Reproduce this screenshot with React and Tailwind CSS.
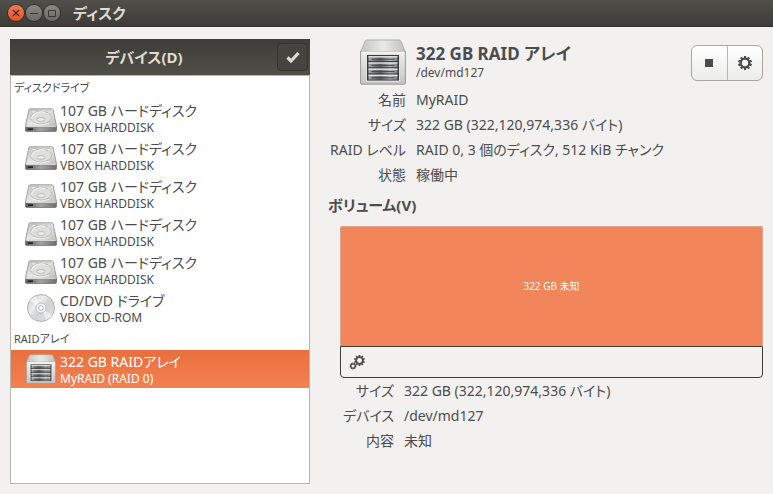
import React, { useId, useState } from 'react';

const drives = [
  { id: 'sda', kind: 'disk', name: '107 GB ハードディスク', model: 'VBOX HARDDISK' },
  { id: 'sdb', kind: 'disk', name: '107 GB ハードディスク', model: 'VBOX HARDDISK' },
  { id: 'sdc', kind: 'disk', name: '107 GB ハードディスク', model: 'VBOX HARDDISK' },
  { id: 'sdd', kind: 'disk', name: '107 GB ハードディスク', model: 'VBOX HARDDISK' },
  { id: 'sde', kind: 'disk', name: '107 GB ハードディスク', model: 'VBOX HARDDISK' },
  { id: 'sr0', kind: 'optical', name: 'CD/DVD ドライブ', model: 'VBOX CD-ROM' },
];

const arrays = [{ id: 'md127', kind: 'raid', name: '322 GB RAIDアレイ', model: 'MyRAID (RAID 0)' }];

const arrayDetails = [
  ['名前', 'MyRAID'],
  ['サイズ', '322 GB (322,120,974,336 バイト)'],
  ['RAID レベル', 'RAID 0, 3 個のディスク, 512 KiB チャンク'],
  ['状態', '稼働中'],
];

const volumeDetails = [
  ['サイズ', '322 GB (322,120,974,336 バイト)'],
  ['デバイス', '/dev/md127'],
  ['内容', '未知'],
];

const HardDiskIcon = () => {
  const id = useId();
  return (
    <svg viewBox="0 -3 32 27" className="h-[27px] w-8" aria-hidden="true">
      <defs>
        <linearGradient id={`${id}top`} x1="0" y1="0" x2="1" y2="1">
          <stop offset="0" stopColor="#c6c6c4" />
          <stop offset="0.5" stopColor="#e6e6e5" />
          <stop offset="1" stopColor="#bcbcba" />
        </linearGradient>
        <linearGradient id={`${id}front`}>
          <stop offset="0" stopColor="#5c5c5a" />
          <stop offset="0.5" stopColor="#a2a2a0" />
          <stop offset="1" stopColor="#6e6e6c" />
        </linearGradient>
      </defs>
      <path d="M.5 18.5h31v3.7q0 1.3-1.3 1.3H1.8Q.5 23.5.5 22.2z" fill={`url(#${id}front)`} stroke="#5c5c5a" strokeWidth="0.6" />
      <path d="M5.2.8h21.600q1 0 1.300 1l3.400 16q.2 1.200-1 1.200h-29q-1.200 0-1-1.200l3.400-16q.3-1 1.300-1z" fill={`url(#${id}top)`} stroke="#8c8c8a" strokeWidth="0.8" />
      <ellipse cx="16" cy="9.500" rx="10.500" ry="6.500" fill="#dededc" stroke="#adadab" strokeWidth="0.7" />
      <path d="M6.500 11C7 5.500 14 3 20 4.200" fill="none" stroke="#fafafa" strokeWidth="0.9" />
      <path d="M8 15.500q8 3 16 0" fill="none" stroke="#f7f7f6" strokeWidth="0.8" />
      <ellipse cx="16" cy="11.500" rx="4" ry="1.900" fill="#ededec" stroke="#a8a8a6" strokeWidth="0.7" />
      <path d="M6.500 2.500h6l-5 3.500zM21 2.700l4.500.2.8 3.600" fill="#ececeb" stroke="#b3b3b1" strokeWidth="0.6" />
      <path d="M3 20.300h5v1.700H3z" fill="#232322" />
      <path d="M1.500 18.400h29" stroke="#f5f5f5" strokeWidth="0.6" />
    </svg>
  );
};

const DiscIcon = () => {
  const id = useId();
  return (
    <svg viewBox="0 0 32 32" className="size-8" aria-hidden="true">
      <defs>
        <linearGradient id={`${id}disc`} x1="0" y1="0" x2="1" y2="1">
          <stop offset="0" stopColor="#c9c9c9" />
          <stop offset="0.35" stopColor="#ececec" />
          <stop offset="0.55" stopColor="#d0d2d4" />
          <stop offset="1" stopColor="#e4e4e4" />
        </linearGradient>
      </defs>
      <circle cx="16" cy="16" r="13.500" fill={`url(#${id}disc)`} stroke="#a9a9a9" strokeWidth="0.9" />
      <path d="M16 16L5 8.500A13 13 0 0 1 11 4zM16 16l11 7.500a13 13 0 0 1-6 4.500z" fill="#fff" opacity="0.5" />
      <circle cx="16" cy="16" r="5" fill="#f4f4f4" stroke="#b4b4b4" strokeWidth="0.8" />
      <circle cx="16" cy="16" r="2.300" fill="#fff" stroke="#9c9c9c" strokeWidth="0.8" />
    </svg>
  );
};

const RaidIcon = ({ className }) => {
  const id = useId();
  return (
    <svg viewBox="0 0 46 46" className={className} aria-hidden="true">
      <defs>
        <linearGradient id={`${id}top`}>
          <stop offset="0" stopColor="#c4c5c2" />
          <stop offset="0.5" stopColor="#e9e9e7" />
          <stop offset="1" stopColor="#c0c1be" />
        </linearGradient>
        <linearGradient id={`${id}body`} x1="0" y1="0" x2="0" y2="1">
          <stop offset="0" stopColor="#f0f0ef" />
          <stop offset="1" stopColor="#c4c5c2" />
        </linearGradient>
        <linearGradient id={`${id}bay`}>
          <stop offset="0" stopColor="#a5a7a9" />
          <stop offset="0.4" stopColor="#5c5e61" />
          <stop offset="0.75" stopColor="#b4b6b8" />
          <stop offset="1" stopColor="#808284" />
        </linearGradient>
      </defs>
      <path d="M7 1h32q1.500 0 2.100 1.400L45.400 13H.6L4.900 2.400Q5.500 1 7 1z" fill={`url(#${id}top)`} stroke="#a9aaa7" strokeWidth="0.8" />
      <path d="M.6 12.500h44.800V44q0 1.200-1.200 1.200H1.800Q.6 45.200.6 44z" fill={`url(#${id}body)`} stroke="#8f918d" strokeWidth="0.9" />
      <path d="M1.500 13h43" stroke="#fff" strokeWidth="1.200" />
      <path d="M6.500 15.500h33v26.500h-33z" fill="#3a3b3c" stroke="#f8f8f7" strokeWidth="0.8" />
      {[17, 23.200, 29.400, 35.600].map(y => (
        <g key={y}>
          <rect x="8.500" y={y} width="29" height="5" fill={`url(#${id}bay)`} />
          <path d={`M8.500 ${y + 0.8}h29`} stroke="#e2e3e4" strokeWidth="1.400" />
          <path d={`M11.500 ${y + 3.2}h23`} stroke="#44464a" strokeWidth="1" />
        </g>
      ))}
    </svg>
  );
};

const Gear = ({ cx, cy, r }) => (
  <g transform={`translate(${cx} ${cy}) scale(${r / 7})`}>
    {[0, 36, 72, 108, 144].map(a => (
      <path key={a} d="M0-7v3M0 7V4" stroke="currentColor" strokeWidth="2.200" transform={`rotate(${a})`} />
    ))}
    <circle r="4.300" fill="none" stroke="currentColor" strokeWidth="2.300" />
  </g>
);

const icons = {
  disk: <HardDiskIcon />,
  optical: <DiscIcon />,
  raid: <RaidIcon className="size-[30px]" />,
};

const TitleBar = () => (
  <header className="flex h-[27px] items-center gap-[2px] border-b border-[#33322e] bg-linear-to-b from-[#504f4a] to-[#3d3c38] px-2">
    <button aria-label="閉じる" className="flex size-4 items-center justify-center rounded-full bg-linear-to-b from-[#f5794f] to-[#e4532a] text-[#4a2013] ring-1 ring-[#32312d]">
      <svg viewBox="0 0 8 8" className="size-2"><path d="M1 1l6 6M7 1L1 7" stroke="currentColor" strokeWidth="1.200" /></svg>
    </button>
    <button aria-label="最小化" className="flex size-4 items-center justify-center rounded-full bg-linear-to-b from-[#8a8882] to-[#6b6963] text-[#383733] ring-1 ring-[#32312d]">
      <svg viewBox="0 0 8 8" className="size-2"><path d="M0 4.500h8" stroke="currentColor" /></svg>
    </button>
    <button aria-label="最大化" className="flex size-4 items-center justify-center rounded-full bg-linear-to-b from-[#8a8882] to-[#6b6963] text-[#383733] ring-1 ring-[#32312d]">
      <svg viewBox="0 0 8 8" className="size-2"><path d="M.5 1.500h7v6h-7z" fill="none" stroke="currentColor" /></svg>
    </button>
    <h1 className="ml-[11px] text-[15px] leading-5 font-bold text-[#dfdbd2]">ディスク</h1>
  </header>
);

const DeviceRow = ({ device, selected, onSelect }) => (
  <li>
    <button
      onClick={() => onSelect(device.id)}
      aria-pressed={selected}
      className={`flex h-[38px] w-full items-center gap-[3px] pl-[14px] text-left ${selected ? 'bg-linear-to-b from-[#e86f3d] to-[#f58150] text-white' : 'text-[#4c4c4c]'}`}
    >
      <span className="flex w-8 shrink-0 justify-center">{icons[device.kind]}</span>
      <span className="min-w-0 pt-[3px] whitespace-nowrap">
        <span className="block text-[14px] leading-4">{device.name}</span>
        <span className="block text-[12px] leading-[17px]">{device.model}</span>
      </span>
    </button>
  </li>
);

const DeviceGroup = ({ title, devices, selected, onSelect }) => (
  <section>
    <h3 className="pl-[3px] text-[11px] leading-[23px]">{title}</h3>
    <ul>
      {devices.map(d => (
        <DeviceRow key={d.id} device={d} selected={d.id === selected} onSelect={onSelect} />
      ))}
    </ul>
  </section>
);

const Details = ({ rows, className }) => (
  <dl className={`grid gap-x-[10px] text-[14px] leading-[25px] ${className}`}>
    {rows.map(([label, value]) => (
      <React.Fragment key={label}>
        <dt className="text-right whitespace-nowrap">{label}</dt>
        <dd>{value}</dd>
      </React.Fragment>
    ))}
  </dl>
);

const App = () => {
  const [selected, setSelected] = useState('md127');

  return (
    <div className="flex min-h-screen flex-col bg-[#f2f1f0] font-['Noto_Sans','Noto_Sans_CJK_JP',sans-serif] text-[#4c4c4c] [font-feature-settings:'palt']">
      <TitleBar />
      <main className="flex grow gap-[18px] px-[10px] pt-3 pb-[10px]">
        <aside className="flex w-[300px] shrink-0 flex-col">
          <div className="grid h-9 grid-cols-[1fr_auto_1fr] items-center bg-linear-to-b from-[#3e3d39] to-[#504e47] text-[#dfdbd2]">
            <h2 className="col-start-2 pr-8 text-[15px] font-bold">デバイス(D)</h2>
            <button aria-label="選択" className="mr-[2px] flex h-7 w-[31px] items-center justify-center justify-self-end rounded-sm border border-[#35342f] bg-[#45443f]">
              <svg viewBox="0 0 14 12" className="h-3 w-[14px]"><path d="M1.500 6.500l3.500 3.500L12.500 2" fill="none" stroke="currentColor" strokeWidth="3.200" /></svg>
            </button>
          </div>
          <div className="grow border border-[#b8b5b0] bg-white">
            <DeviceGroup title="ディスクドライブ" devices={drives} selected={selected} onSelect={setSelected} />
            <DeviceGroup title="RAIDアレイ" devices={arrays} selected={selected} onSelect={setSelected} />
          </div>
        </aside>

        <section className="min-w-0 grow">
          <div className="flex h-12 items-start">
            <div className="flex w-[78px] shrink-0 justify-end">
              <RaidIcon className="size-[46px]" />
            </div>
            <div className="ml-[10px] grow pt-1">
              <h2 className="text-[17px] leading-[22px] font-bold">322 GB RAID アレイ</h2>
              <p className="text-[12px] leading-4">/dev/md127</p>
            </div>
            <div className="mt-[6px] flex h-9 w-[72px] divide-x divide-[#b8b5b0] rounded-md border border-[#a9a6a1] bg-linear-to-b from-white to-[#ececeb]">
              <button aria-label="停止" className="flex flex-1 items-center justify-center">
                <span className="size-2 bg-[#4c4c4c]" />
              </button>
              <button aria-label="設定" className="flex flex-1 items-center justify-center">
                <svg viewBox="0 0 16 16" className="size-4"><Gear cx={8} cy={8} r={7} /></svg>
              </button>
            </div>
          </div>

          <Details rows={arrayDetails} className="grid-cols-[78px_1fr]" />

          <h3 className="mt-[7px] text-[15px] leading-[22px] font-bold">ボリューム(V)</h3>
          <div className="mt-[10px] ml-3">
            <button className="block h-[120px] w-full rounded-t-xs border border-b-0 border-[#d9a58d] bg-[#f28559] text-[10px] text-white">
              322 GB 未知
            </button>
            <div className="flex h-8 items-center rounded-b-sm border border-[#3c3c3c] px-2">
              <button aria-label="ボリュームの操作">
                <svg viewBox="0 0 16 16" className="size-4">
                  <Gear cx={10.5} cy={6.5} r={5.5} />
                  <Gear cx={4} cy={12} r={3.5} />
                </svg>
              </button>
            </div>
            <Details rows={volumeDetails} className="grid-cols-[54px_1fr]" />
          </div>
        </section>
      </main>
    </div>
  );
};

export default App;
